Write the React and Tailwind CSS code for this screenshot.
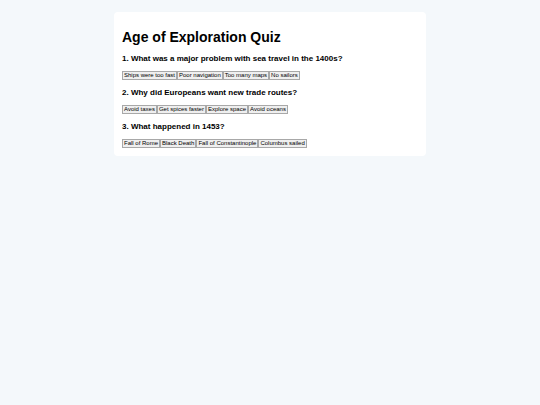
import { useState } from "react";

const questions = [
  {
    text: "What was a major problem with sea travel in the 1400s?",
    options: ["Ships were too fast", "Poor navigation", "Too many maps", "No sailors"],
  },
  {
    text: "Why did Europeans want new trade routes?",
    options: ["Avoid taxes", "Get spices faster", "Explore space", "Avoid oceans"],
  },
  {
    text: "What happened in 1453?",
    options: ["Fall of Rome", "Black Death", "Fall of Constantinople", "Columbus sailed"],
  },
];

export default function App() {
  const [answers, setAnswers] = useState({});

  return (
    <div className="min-h-screen bg-[#f4f8fb] pt-3 font-['Liberation_Sans',Arial,sans-serif] text-black">
      <main className="mx-auto max-w-[312px] rounded bg-white px-2 pt-[17px] pb-2">
        <h1 className="text-[14px] leading-4 font-bold">Age of Exploration Quiz</h1>

        <div className="mt-[9px] flex flex-col gap-2">
          {questions.map((q, index) => (
            <section key={index}>
              <h3 className="text-[8px] leading-[10px] font-bold">
                {index + 1}. {q.text}
              </h3>
              <div className="mt-[7px] flex">
                {q.options.map((option) => (
                  <button
                    key={option}
                    type="button"
                    aria-pressed={answers[index] === option}
                    onClick={() => setAnswers({ ...answers, [index]: option })}
                    className="h-[9px] border border-[#a8a8a8] bg-[#efefef] px-px text-[6px] leading-[7px] whitespace-nowrap"
                  >
                    {option}
                  </button>
                ))}
              </div>
            </section>
          ))}
        </div>
      </main>
    </div>
  );
}
